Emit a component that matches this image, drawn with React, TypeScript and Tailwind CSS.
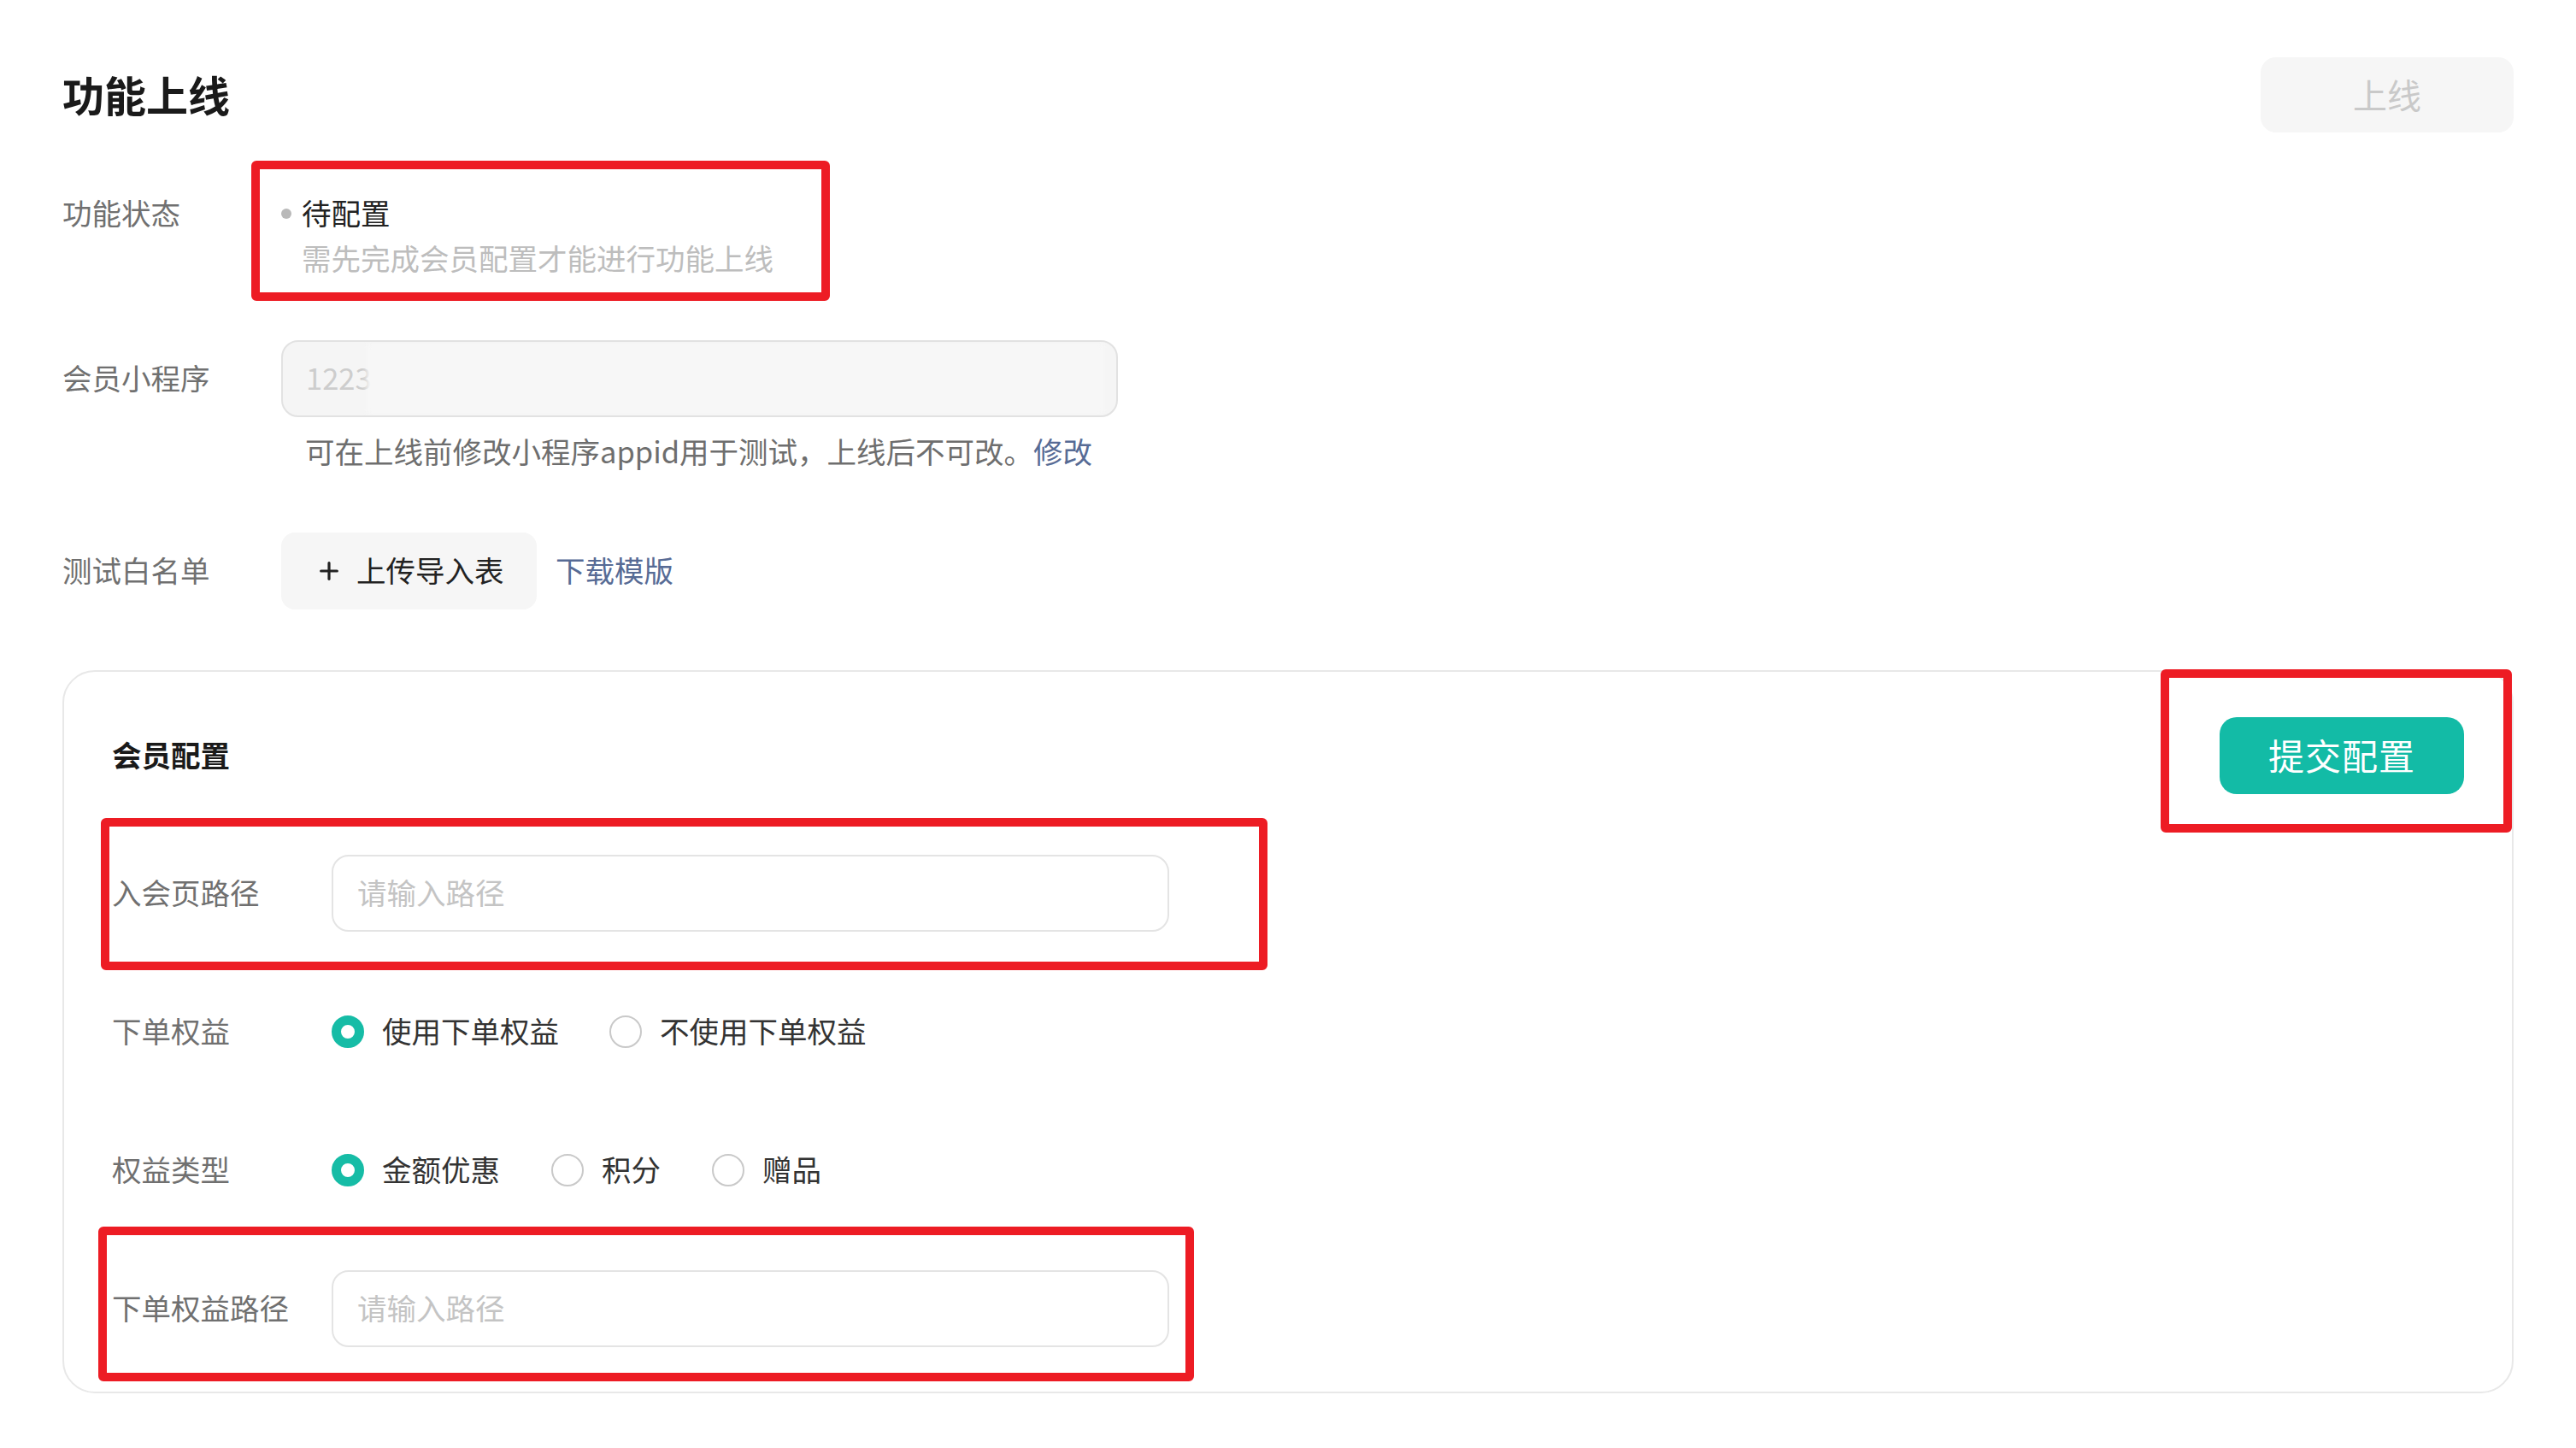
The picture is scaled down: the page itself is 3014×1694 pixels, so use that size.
import { Plus } from "lucide-react";

const font = "font-['PingFang_SC','Noto_Sans_CJK_SC','Noto_Sans',sans-serif]";

const Radio = ({ checked, label }: { checked?: boolean; label: string }) => (
  <label className="flex items-center gap-[21px]">
    <span
      className={
        checked
          ? "w-[38px] h-[38px] rounded-full border-[11px] border-[#16bca6] bg-white"
          : "w-[38px] h-[38px] rounded-full border-[2px] border-[#c9c9c9] bg-white"
      }
    />
    <span className="text-[34.5px] text-[#333] -mt-[3px]">{label}</span>
  </label>
);

const PathInput = () => (
  <div className="w-[980px] h-[90px] rounded-[20px] border-2 border-[#e4e4e4] bg-white flex items-center pl-[28px] pb-[3px] text-[34.5px] text-[#c4c4c4]">
    请输入路径
  </div>
);

const Mark = ({ className }: { className: string }) => (
  <div className={`absolute border-[10px] border-[#ed1c24] rounded-[6px] pointer-events-none ${className}`} />
);

const Label = ({ children, w }: { children: string; w: string }) => (
  <div className={`${w} text-[34.5px] text-[#707070] -mt-[3px]`}>{children}</div>
);

const App = () => (
  <div className={`relative w-[3014px] h-[1694px] bg-white overflow-hidden ${font}`}>
    <div className="px-[73px] pt-[67px]">
      {/* header */}
      <div className="flex items-center justify-between h-[88px]">
        <h1 className="text-[49px] font-bold text-[#1a1a1a] leading-none -mt-[4px]">功能上线</h1>
        <button className="w-[296px] h-[88px] rounded-[18px] bg-[#f6f6f6] text-[40px] text-[#c9c9c9] pb-[3px]">
          上线
        </button>
      </div>

      {/* status */}
      <div className="flex mt-[67px] text-[34.5px] leading-[53px]">
        <div className="w-[256px] text-[#707070]">功能状态</div>
        <div className="flex">
          <div className="w-[24px] h-[53px] flex items-center pt-[3px]">
            <span className="w-[12px] h-[12px] rounded-full bg-[#b9b9b9]" />
          </div>
          <div>
            <p className="text-[#222]">待配置</p>
            <p className="text-[#bdbdbd]">需先完成会员配置才能进行功能上线</p>
          </div>
        </div>
      </div>

      {/* mini program */}
      <div className="flex items-center mt-[70px]">
        <Label w="w-[256px]">会员小程序</Label>
        <div className="relative w-[979px] h-[90px] rounded-[20px] border-2 border-[#e2e2e2] bg-[#f5f5f5] flex items-center pl-[27px] pb-[3px] text-[34.5px] text-[#cdcdcd] overflow-hidden">
          1223
          <div className="absolute left-[98px] right-[14px] top-[2px] bottom-[2px] bg-[#f7f7f7] blur-[3px]" />
        </div>
      </div>
      <p className="mt-[13px] ml-[284px] text-[34.5px] leading-[53px] text-[#6e6e6e]">
        可在上线前修改小程序appid用于测试，上线后不可改。<span className="text-[#576b95]">修改</span>
      </p>

      {/* whitelist */}
      <div className="flex items-center mt-[69px]">
        <Label w="w-[256px]">测试白名单</Label>
        <button className="h-[90px] w-[299px] rounded-[16px] bg-[#f6f6f6] flex items-center pl-[40px] gap-[16px] text-[34.5px] text-[#222]">
          <Plus size={32} strokeWidth={2.4} className="text-[#222]" />
          <span className="-mt-[3px]">上传导入表</span>
        </button>
        <a className="ml-[22px] text-[34.5px] text-[#576b95] -mt-[3px]">下载模版</a>
      </div>

      {/* member config card */}
      <div className="mt-[71px] h-[846px] rounded-[38px] border-2 border-[#e8e8e8] px-[56px] pt-[53px] pb-[53px]">
        <div className="flex items-center justify-between h-[90px]">
          <h2 className="text-[34.5px] font-bold text-[#1a1a1a] -mt-[3px]">会员配置</h2>
          <button className="w-[286px] h-[90px] rounded-[20px] bg-[#13bba6] text-[42px] text-white tracking-[1px] pb-[3px]">
            提交配置
          </button>
        </div>

        <div className="flex flex-col gap-[72px] mt-[71px]">
          <div className="flex items-center">
            <Label w="w-[257px]">入会页路径</Label>
            <PathInput />
          </div>
          <div className="flex items-center h-[90px]">
            <Label w="w-[257px]">下单权益</Label>
            <div className="flex items-center gap-[59px]">
              <Radio checked label="使用下单权益" />
              <Radio label="不使用下单权益" />
            </div>
          </div>
          <div className="flex items-center h-[90px]">
            <Label w="w-[257px]">权益类型</Label>
            <div className="flex items-center gap-[60px]">
              <Radio checked label="金额优惠" />
              <Radio label="积分" />
              <Radio label="赠品" />
            </div>
          </div>
          <div className="flex items-center">
            <Label w="w-[257px]">下单权益路径</Label>
            <PathInput />
          </div>
        </div>
      </div>
    </div>

    {/* annotation boxes */}
    <Mark className="left-[294px] top-[188px] w-[677px] h-[164px]" />
    <Mark className="left-[2528px] top-[783px] w-[411px] h-[191px]" />
    <Mark className="left-[118px] top-[957px] w-[1365px] h-[178px]" />
    <Mark className="left-[115px] top-[1435px] w-[1282px] h-[181px]" />
  </div>
);

export default App;
